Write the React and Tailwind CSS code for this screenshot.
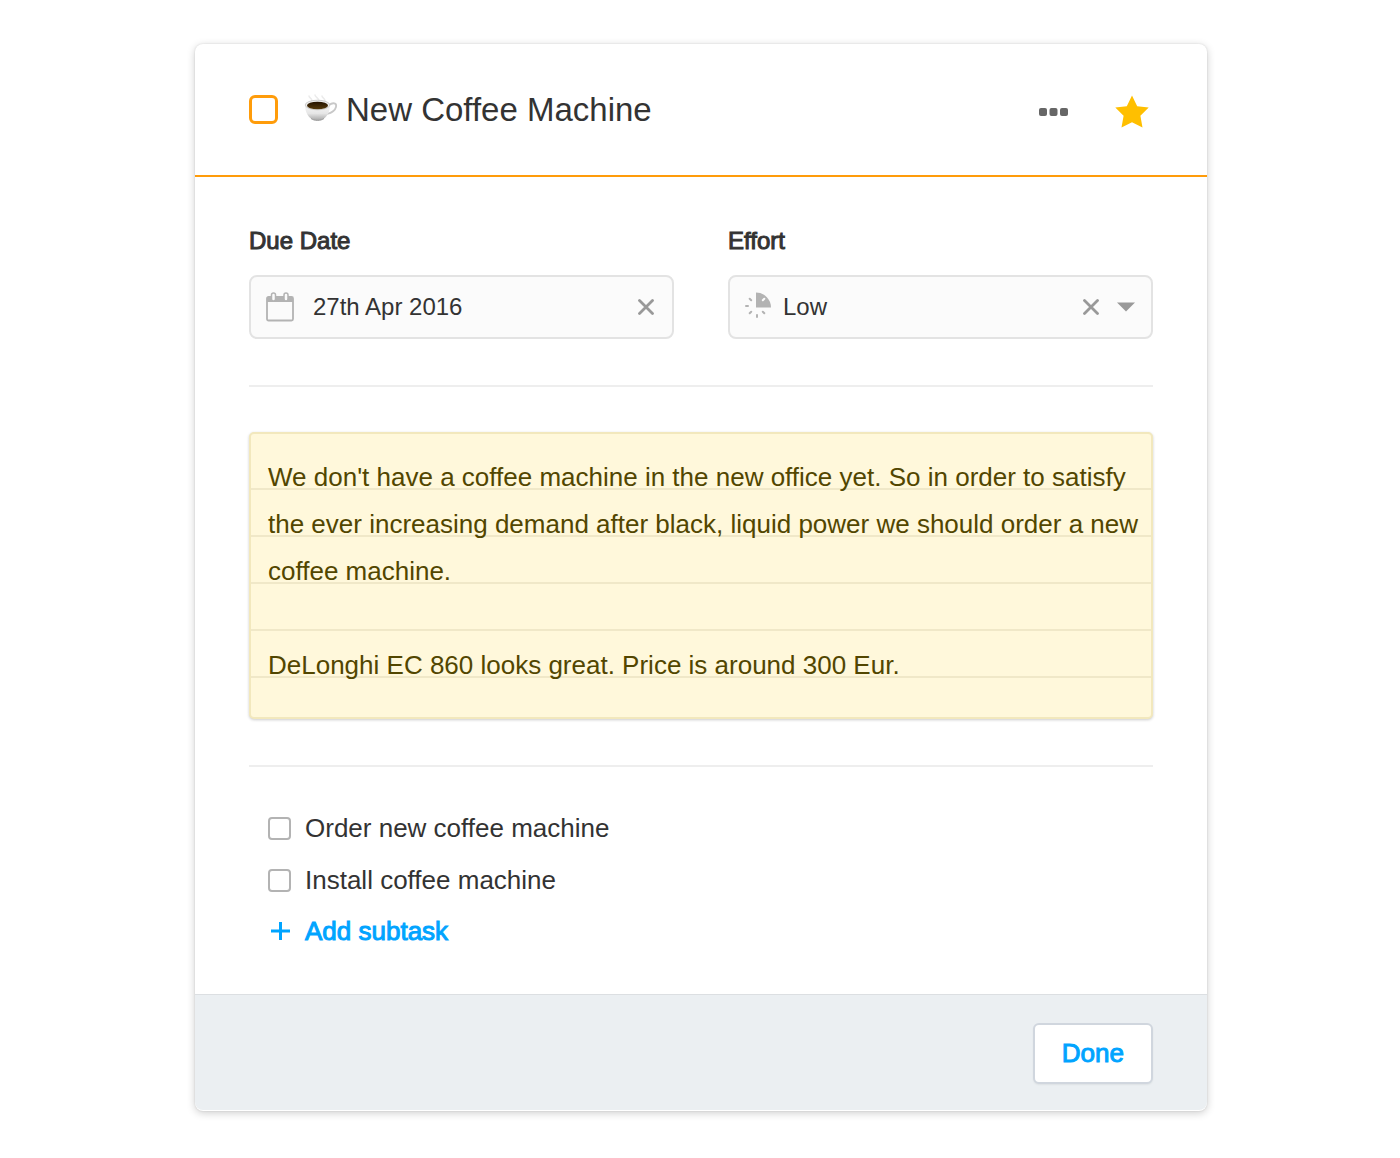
import { useState } from "react";

function CoffeeIcon() {
  return (
    <svg width="34" height="32" viewBox="0 0 34 32" aria-hidden="true">
      <defs>
        <linearGradient id="cup" x1="0" y1="0" x2="0" y2="1">
          <stop offset="0" stopColor="#f6f6f6" />
          <stop offset="0.55" stopColor="#e6e6e6" />
          <stop offset="1" stopColor="#a8a8a8" />
        </linearGradient>
        <linearGradient id="coffee" x1="0" y1="0" x2="0" y2="1">
          <stop offset="0" stopColor="#241300" />
          <stop offset="1" stopColor="#553a0c" />
        </linearGradient>
      </defs>
      <g fill="none" stroke="#ebebeb" strokeWidth="1.500" strokeLinecap="round">
        <path d="M5 2c0 2 3 2 3 5" />
        <path d="M11 1c0 2 4 3 4 6" />
        <path d="M18 2c0 2 3 2 3 5" />
      </g>
      <path d="M25 11c4-3 8-2 7 2-1 4-5 6-9 7" fill="none" stroke="#c8c8c8" strokeWidth="1.800" />
      <path d="M1 11c0 6 2.500 11 6 13.500 3 2.500 10 2.500 13 0 3.500-2.500 6-7.500 6-13.500z" fill="url(#cup)" />
      <path d="M7 24.500c3 2.500 10 2.500 13 0" fill="none" stroke="#9c9c9c" strokeWidth="1" />
      <ellipse cx="13.500" cy="11" rx="12.300" ry="4.800" fill="#efefef" stroke="#c4c4c4" strokeWidth="0.800" />
      <ellipse cx="13.500" cy="11.500" rx="10.500" ry="3.800" fill="url(#coffee)" />
    </svg>
  );
}

function CalendarIcon() {
  return (
    <svg width="28" height="30" viewBox="0 0 28 30" aria-hidden="true" className="shrink-0">
      <rect x="1" y="5" width="26" height="23.500" rx="1.500" fill="#fbfbfb" stroke="#b3b3b3" strokeWidth="1.800" />
      <path d="M1 5h26v5H1z" fill="#b3b3b3" />
      <rect x="5.500" y="1" width="4" height="8" rx="2" fill="#fbfbfb" stroke="#b3b3b3" strokeWidth="1.500" />
      <rect x="18" y="1" width="4" height="8" rx="2" fill="#fbfbfb" stroke="#b3b3b3" strokeWidth="1.500" />
    </svg>
  );
}

function EffortIcon() {
  return (
    <svg width="27" height="30" viewBox="0 0 27 30" aria-hidden="true" className="shrink-0">
      <path d="M11 0.500A15 15 0 0 1 26 15.500H11z" fill="#b3b3b3" />
      <g stroke="#b3b3b3" strokeWidth="2" strokeLinecap="round">
        <path d="M1 14h2M4.700 6.800l1.500 1.500M4.700 21.300l1.500-1.500M12 23v2M17.800 19.800l1.500 1.500" />
        <path d="M17.800 8.300l1.500-1.500" stroke="#fbfbfb" />
      </g>
    </svg>
  );
}

function ClearIcon() {
  return (
    <svg width="16" height="16" viewBox="0 0 16 16" aria-hidden="true">
      <path d="M1.500 1.500l13 13M14.500 1.500l-13 13" stroke="#999" strokeWidth="2.800" strokeLinecap="round" />
    </svg>
  );
}

function Subtask({ id, text }) {
  return (
    <li className="flex h-[52px] items-center gap-[14px]">
      <input
        id={id}
        type="checkbox"
        className="size-[23px] shrink-0 appearance-none rounded-[4px] border-2 border-[#b3b3b3] bg-white checked:bg-[#b3b3b3]"
      />
      <label htmlFor={id}>{text}</label>
    </li>
  );
}

const noteText = `We don't have a coffee machine in the new office yet. So in order to satisfy the ever increasing demand after black, liquid power we should order a new coffee machine.

DeLonghi EC 860 looks great. Price is around 300 Eur.`;

export default function App() {
  const [date, setDate] = useState("27th Apr 2016");
  const [effort, setEffort] = useState("Low");

  return (
    <div className="flex min-h-screen items-start justify-center bg-white py-11 pl-0.5 font-['Liberation_Sans',Arial,sans-serif] text-[#333]">
      <main className="w-full max-w-[1012px] rounded-[8px] bg-white pb-px shadow-[0_2px_8px_rgba(0,0,0,0.2),0_0_2px_rgba(0,0,0,0.12)]">
        <header className="flex h-[133px] items-center border-b-2 border-[#ff9c0a] px-[54px]">
          <input
            type="checkbox"
            aria-label="Complete New Coffee Machine"
            className="size-[29px] shrink-0 appearance-none rounded-[6px] border-3 border-[#ff9c0a] checked:bg-[#ff9c0a]"
          />
          <h1 className="ml-[26px] flex flex-1 items-center gap-2 text-[33px] leading-10">
            <CoffeeIcon />
            New Coffee Machine
          </h1>
          <div className="flex items-center gap-[46px] pt-1">
            <button type="button" aria-label="More actions">
              <svg width="30" height="8" viewBox="0 0 30 8" fill="#666" aria-hidden="true">
                <rect width="8" height="8" rx="2" />
                <rect x="10.500" width="8" height="8" rx="2" />
                <rect x="21" width="8" height="8" rx="2" />
              </svg>
            </button>
            <button type="button" aria-label="Starred" className="mr-1">
              <svg width="34" height="33" viewBox="0 0 34 33" fill="#ffbf00" aria-hidden="true">
                <path d="M17 0.500l5.200 10.700L33.700 12.600l-8.300 8.200 2.100 11.700L17 27.200 6.500 32.500l2.100-11.700L0.300 12.600l11.500-1.400z" />
              </svg>
            </button>
          </div>
        </header>

        <div className="px-[54px] pt-12 pb-[38px]">
          <div className="grid grid-cols-2 gap-[54px] text-[24px]">
            <div>
              <label htmlFor="due" className="block leading-8 [-webkit-text-stroke:1px_#333]">
                Due Date
              </label>
              <div className="mt-[18px] flex h-16 items-center rounded-[8px] border-2 border-[#e3e3e3] bg-[#fbfbfb] px-[15px]">
                <CalendarIcon />
                <input
                  id="due"
                  type="text"
                  value={date}
                  onChange={(e) => setDate(e.target.value)}
                  className="ml-[19px] min-w-0 flex-1 bg-transparent leading-8 outline-none"
                />
                <button type="button" aria-label="Clear due date" onClick={() => setDate("")} className="mr-[3px]">
                  <ClearIcon />
                </button>
              </div>
            </div>
            <div>
              <label htmlFor="effort" className="block leading-8 [-webkit-text-stroke:1px_#333]">
                Effort
              </label>
              <div className="mt-[18px] flex h-16 items-center rounded-[8px] border-2 border-[#e3e3e3] bg-[#fbfbfb] pr-4 pl-[15px]">
                <EffortIcon />
                <select
                  id="effort"
                  value={effort}
                  onChange={(e) => setEffort(e.target.value)}
                  className="ml-[11px] min-w-0 flex-1 appearance-none bg-transparent leading-8 outline-none"
                >
                  <option value=""></option>
                  <option>Low</option>
                </select>
                <button type="button" aria-label="Clear effort" onClick={() => setEffort("")}>
                  <ClearIcon />
                </button>
                <svg width="18" height="10" viewBox="0 0 18 10" aria-hidden="true" className="ml-[18px]">
                  <path d="M0 0.500h18L9 9.500z" fill="#999" />
                </svg>
              </div>
            </div>
          </div>

          <hr className="mt-[46px] mb-[45px] border-t-2 border-[#eee]" />

          <div className="rounded-[5px] border-2 border-[#f2e8bd] bg-[#fff8db] pt-[9px] shadow-[0_1px_3px_rgba(0,0,0,0.2)]">
            <textarea
              aria-label="Note"
              rows={5}
              defaultValue={noteText}
              className="block w-full resize-none overflow-hidden bg-[linear-gradient(transparent_45px,#f0e8c8_45px)] bg-[length:100%_47px] pt-[11px] pr-2 pb-7 pl-[17px] text-[26px] leading-[47px] text-[#524600] outline-none"
            />
          </div>

          <hr className="mt-[46px] border-t-2 border-[#eee]" />

          <ul className="mt-[35px] pl-[19px] text-[26px] leading-8">
            <Subtask id="order" text="Order new coffee machine" />
            <Subtask id="install" text="Install coffee machine" />
            <li>
              <button type="button" className="flex h-[50px] items-center gap-[14px] text-[#00a4ff] [-webkit-text-stroke:1px_#00a4ff]">
                <svg width="23" height="20" viewBox="0 0 23 20" aria-hidden="true">
                  <path d="M3 10h19M12.500 1v18" stroke="#00a4ff" strokeWidth="3" />
                </svg>
                Add subtask
              </button>
            </li>
          </ul>
        </div>

        <footer className="flex justify-end rounded-b-[8px] border-t border-[#dcdfe2] bg-[#ebeff2] px-[54px] pt-7 pb-[26px]">
          <button
            type="button"
            className="h-[61px] rounded-[6px] border-2 border-[#d0d6de] bg-white px-[27px] text-[26px] text-[#00a4ff] shadow-[0_1px_2px_rgba(0,0,0,0.06)] [-webkit-text-stroke:1px_#00a4ff]"
          >
            Done
          </button>
        </footer>
      </main>
    </div>
  );
}
